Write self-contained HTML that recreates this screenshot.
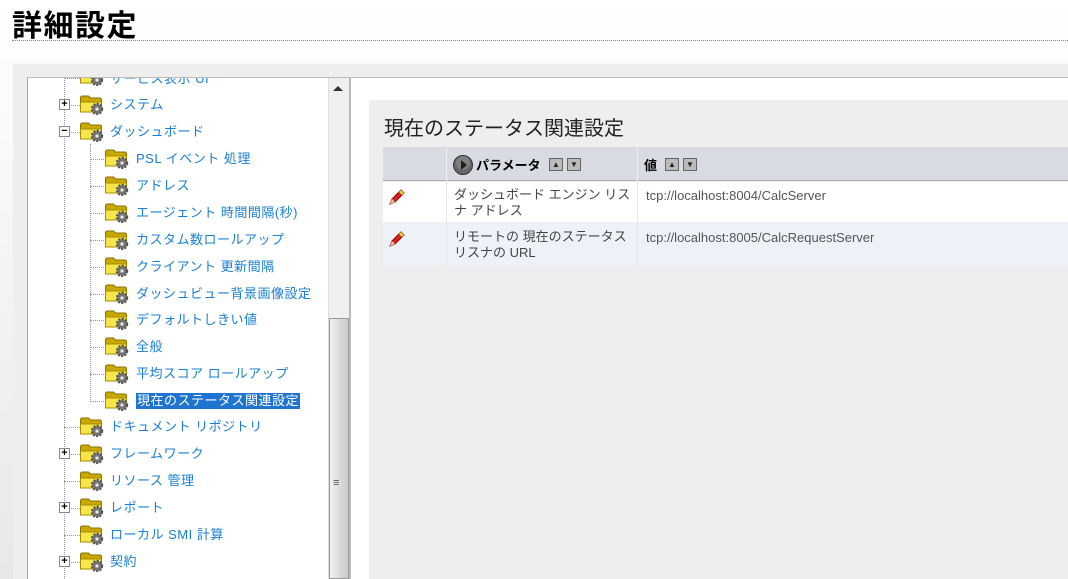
<!DOCTYPE html>
<html><head><meta charset="utf-8"><style>
*{margin:0;padding:0;box-sizing:border-box}
body{width:1068px;height:579px;overflow:hidden;background:linear-gradient(#fff,#e8e8e8);font-family:"Liberation Sans","Noto Sans CJK JP",sans-serif;position:relative}
.a{position:absolute}
h1{position:absolute;left:12px;top:1px;font-size:30px;letter-spacing:1.5px;font-weight:bold;color:#000;font-family:"Liberation Sans","Noto Sans CJK JP",sans-serif}
.t{position:absolute;font-size:13px;letter-spacing:0.5px;color:#1a7fd4;white-space:nowrap;line-height:16px}
.f{position:absolute;width:26px;height:22px}
.pm{position:absolute;width:11px;height:11px;border:1px solid #888;background:#fff;font-size:11px;line-height:9px;text-align:center;font-weight:bold;color:#000}
.hd{position:absolute;font-size:13px;font-weight:bold;color:#000}
.sb{position:absolute;width:14px;height:13px;border:1px solid #666;background:#bbb;font-size:8px;line-height:11px;text-align:center;color:#222}
.cell{position:absolute;font-size:13px;color:#444;line-height:16px}
</style></head><body>
<svg width="0" height="0" style="position:absolute"><defs>
<g id="fd"><path d="M1.5 5q0-2 2-2h6l2 2h9q2 0 2 2v11H1.5z" fill="#c9a800" stroke="#8a7000"/><path d="M1.5 9h21l-1 10H1.5z" fill="#f7e64a" stroke="#a88c00"/><circle cx="18" cy="16" r="5" fill="#888" stroke="#555" stroke-dasharray="2 1.3" stroke-width="2.4"/><circle cx="18" cy="16" r="3" fill="#999" stroke="#666"/><circle cx="18" cy="16" r="1.3" fill="#eee"/></g>
<g id="pen"><path d="M4 18l2-5 9-9 3 3-9 9z" fill="#d22" stroke="#800"/><path d="M13 6l3 3 2-2-3-3z" fill="#cd4"/><path d="M4 18l2-5 3 3z" fill="#e9c9a0"/></g>
</defs></svg>
<h1>詳細設定</h1>
<div class="a" style="left:12px;top:40px;width:1056px;border-top:1px dotted #888"></div>
<div class="a" style="left:13px;top:64px;width:1055px;height:515px;background:#eee"></div>
<div class="a" style="left:27px;top:77px;width:1041px;height:502px;background:#fff;border-left:1px solid #aaa;border-top:1px solid #bbb"></div>
<div class="a" style="left:328px;top:78px;width:21px;height:501px;background:#f0f0f0;border-left:1px solid #ddd"></div>
<div class="a" style="left:333px;top:86px;width:0;height:0;border-left:5px solid transparent;border-right:5px solid transparent;border-bottom:5px solid #333"></div>
<div class="a" style="left:329px;top:318px;width:20px;height:261px;background:linear-gradient(90deg,#f2f2f2,#d8d8d8 60%,#ccc);border:1px solid #999"></div>
<div class="a" style="left:333px;top:479px;font-size:11px;color:#555;line-height:8px">≡</div>
<div class="a" style="left:349px;top:78px;width:2px;height:501px;background:#bbb"></div>
<div class="a" style="left:369px;top:100px;width:699px;height:479px;background:#eee"></div>
<div class="a" style="left:384px;top:112px;font-size:20px;color:#222">現在のステータス関連設定</div>
<div class="a" style="left:383px;top:147px;width:685px;height:34px;background:#d8dbe2;border-bottom:1px solid #aaa"></div>
<div class="a" style="left:446px;top:147px;width:1px;height:118px;background:#eee"></div>
<div class="a" style="left:637px;top:147px;width:1px;height:118px;background:#eee"></div>
<div class="a" style="left:383px;top:182px;width:685px;height:40px;background:#fff"></div>
<div class="a" style="left:383px;top:223px;width:685px;height:42px;background:#edf2f9"></div>
<div class="a" style="left:446px;top:182px;width:1px;height:83px;background:#e6e6e6"></div>
<div class="a" style="left:637px;top:182px;width:1px;height:83px;background:#e6e6e6"></div>
<svg class="a" style="left:452px;top:154px" width="22" height="22"><circle cx="11" cy="11" r="9.5" fill="#666" stroke="#333"/><circle cx="11" cy="9" r="7" fill="#999" opacity=".5"/><path d="M9 6l6 5-6 5z" fill="#222"/></svg>
<div class="hd" style="left:476px;top:155px">パラメータ</div>
<div class="sb" style="left:549px;top:158px">▲</div><div class="sb" style="left:567px;top:158px">▼</div>
<div class="hd" style="left:644px;top:155px">値</div>
<div class="sb" style="left:665px;top:158px">▲</div><div class="sb" style="left:683px;top:158px">▼</div>
<svg class="a" style="left:386px;top:186px" width="22" height="22"><use href="#pen"/></svg>
<svg class="a" style="left:386px;top:228px" width="22" height="22"><use href="#pen"/></svg>
<div class="cell" style="left:454px;top:187px;width:180px">ダッシュボード エンジン リスナ アドレス</div>
<div class="cell" style="left:454px;top:229px;width:180px">リモートの 現在のステータス リスナの URL</div>
<div class="cell" style="left:646px;top:188px;color:#555">tcp://localhost:8004/CalcServer</div>
<div class="cell" style="left:646px;top:230px;color:#555">tcp://localhost:8005/CalcRequestServer</div>
<div class="a" style="left:64px;top:78px;height:501px;border-left:1px dotted #999"></div>
<div class="a" style="left:90px;top:144px;height:258px;border-left:1px dotted #999"></div>
<div class="a" style="left:28px;top:78px;width:300px;height:501px;overflow:hidden">
<div style="position:relative;top:-78px">
<div class="a" style="left:36px;top:78px;width:16px;border-top:1px dotted #999"></div>
<svg class="f" style="left:51px;top:64px"><use href="#fd"/></svg><div class="t" style="left:82px;top:71px">サービス表示 UI</div>
<div class="a" style="left:36px;top:105px;width:16px;border-top:1px dotted #999"></div>
<div class="pm" style="left:31px;top:99px">+</div>
<svg class="f" style="left:51px;top:93px"><use href="#fd"/></svg><div class="t" style="left:82px;top:97px">システム</div>
<div class="a" style="left:36px;top:132px;width:16px;border-top:1px dotted #999"></div>
<div class="pm" style="left:31px;top:126px">−</div>
<svg class="f" style="left:51px;top:120px"><use href="#fd"/></svg><div class="t" style="left:82px;top:124px">ダッシュボード</div>
<div class="a" style="left:62px;top:159px;width:16px;border-top:1px dotted #999"></div><svg class="f" style="left:76px;top:147px"><use href="#fd"/></svg><div class="t" style="left:108px;top:151px">PSL イベント 処理</div>
<div class="a" style="left:62px;top:186px;width:16px;border-top:1px dotted #999"></div><svg class="f" style="left:76px;top:174px"><use href="#fd"/></svg><div class="t" style="left:108px;top:178px">アドレス</div>
<div class="a" style="left:62px;top:213px;width:16px;border-top:1px dotted #999"></div><svg class="f" style="left:76px;top:201px"><use href="#fd"/></svg><div class="t" style="left:108px;top:205px">エージェント 時間間隔(秒)</div>
<div class="a" style="left:62px;top:240px;width:16px;border-top:1px dotted #999"></div><svg class="f" style="left:76px;top:228px"><use href="#fd"/></svg><div class="t" style="left:108px;top:232px">カスタム数ロールアップ</div>
<div class="a" style="left:62px;top:267px;width:16px;border-top:1px dotted #999"></div><svg class="f" style="left:76px;top:255px"><use href="#fd"/></svg><div class="t" style="left:108px;top:259px">クライアント 更新間隔</div>
<div class="a" style="left:62px;top:294px;width:16px;border-top:1px dotted #999"></div><svg class="f" style="left:76px;top:282px"><use href="#fd"/></svg><div class="t" style="left:108px;top:286px">ダッシュビュー背景画像設定</div>
<div class="a" style="left:62px;top:320px;width:16px;border-top:1px dotted #999"></div><svg class="f" style="left:76px;top:308px"><use href="#fd"/></svg><div class="t" style="left:108px;top:312px">デフォルトしきい値</div>
<div class="a" style="left:62px;top:347px;width:16px;border-top:1px dotted #999"></div><svg class="f" style="left:76px;top:335px"><use href="#fd"/></svg><div class="t" style="left:108px;top:339px">全般</div>
<div class="a" style="left:62px;top:374px;width:16px;border-top:1px dotted #999"></div><svg class="f" style="left:76px;top:362px"><use href="#fd"/></svg><div class="t" style="left:108px;top:366px">平均スコア ロールアップ</div>
<div class="a" style="left:62px;top:401px;width:16px;border-top:1px dotted #999"></div><svg class="f" style="left:76px;top:389px"><use href="#fd"/></svg><div class="t" style="left:108px;top:393px;background:#1e74d0;color:#fff;padding:0 1px">現在のステータス関連設定</div>
<div class="a" style="left:36px;top:427px;width:16px;border-top:1px dotted #999"></div><svg class="f" style="left:51px;top:415px"><use href="#fd"/></svg><div class="t" style="left:82px;top:419px">ドキュメント リポジトリ</div>
<div class="a" style="left:36px;top:454px;width:16px;border-top:1px dotted #999"></div><div class="pm" style="left:31px;top:448px">+</div><svg class="f" style="left:51px;top:442px"><use href="#fd"/></svg><div class="t" style="left:82px;top:446px">フレームワーク</div>
<div class="a" style="left:36px;top:481px;width:16px;border-top:1px dotted #999"></div><svg class="f" style="left:51px;top:469px"><use href="#fd"/></svg><div class="t" style="left:82px;top:473px">リソース 管理</div>
<div class="a" style="left:36px;top:508px;width:16px;border-top:1px dotted #999"></div><div class="pm" style="left:31px;top:502px">+</div><svg class="f" style="left:51px;top:496px"><use href="#fd"/></svg><div class="t" style="left:82px;top:500px">レポート</div>
<div class="a" style="left:36px;top:535px;width:16px;border-top:1px dotted #999"></div><svg class="f" style="left:51px;top:523px"><use href="#fd"/></svg><div class="t" style="left:82px;top:527px">ローカル SMI 計算</div>
<div class="a" style="left:36px;top:562px;width:16px;border-top:1px dotted #999"></div><div class="pm" style="left:31px;top:556px">+</div><svg class="f" style="left:51px;top:550px"><use href="#fd"/></svg><div class="t" style="left:82px;top:554px">契約</div>
</div></div>
</body></html>
